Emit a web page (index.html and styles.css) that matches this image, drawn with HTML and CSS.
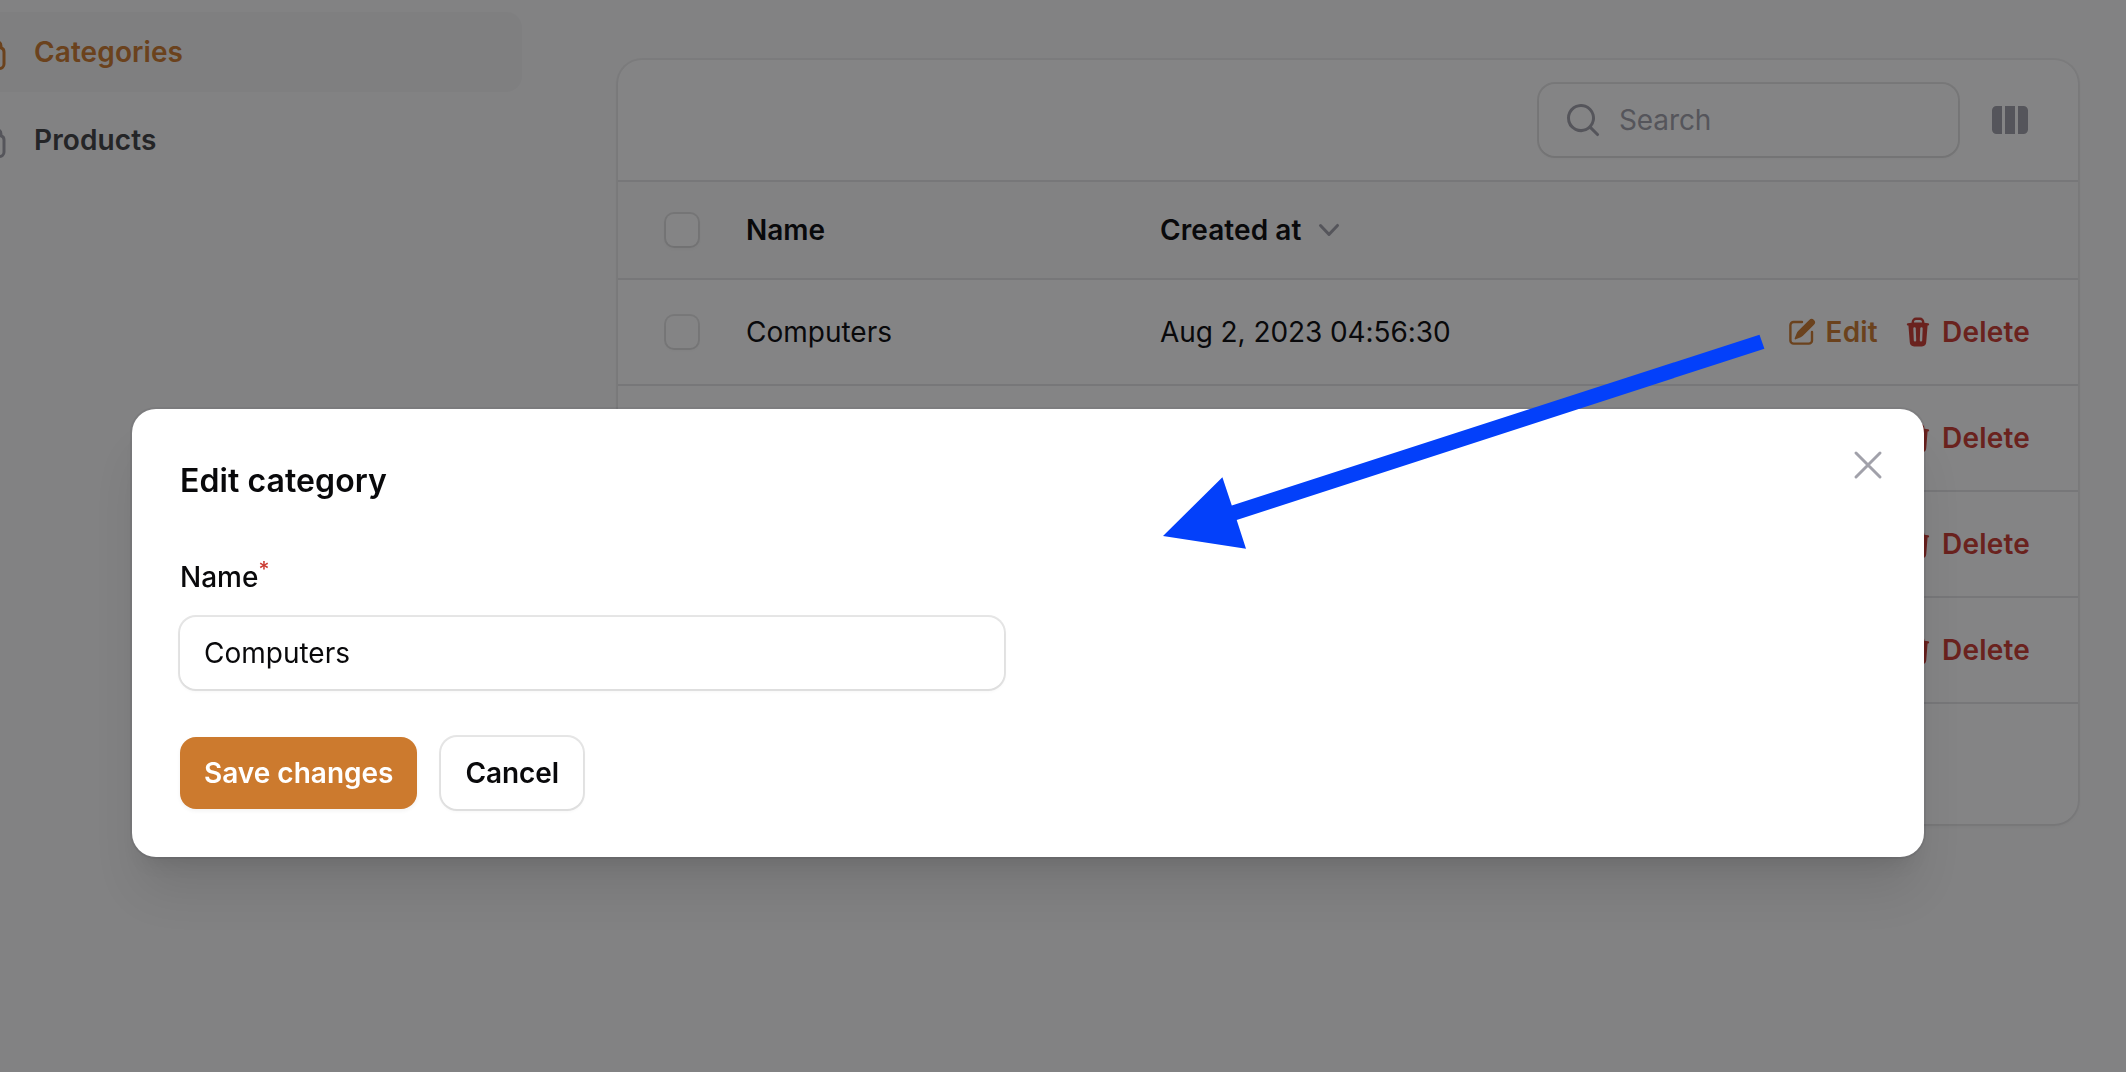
FILE: index.html
```html
<!DOCTYPE html>
<html lang="en">
<head>
<meta charset="utf-8">
<title>Categories</title>
<link rel="stylesheet" href="styles.css">
</head>
<body>
<svg class="sprite" aria-hidden="true">
  <symbol id="stack" viewBox="0 0 24 24"><path fill="none" stroke="currentColor" stroke-width="1.5" stroke-linecap="round" stroke-linejoin="round" d="M6 6.878V6a2.25 2.25 0 012.25-2.25h7.5A2.25 2.25 0 0118 6v.878m-12 0c.235-.083.487-.128.75-.128h10.5c.263 0 .515.045.75.128m-12 0A2.25 2.25 0 004.5 9v.878m13.5-3A2.25 2.25 0 0119.5 9v.878m0 0a2.246 2.246 0 00-.75-.128H5.25c-.263 0-.515.045-.75.128m15 0A2.25 2.25 0 0121 12v6a2.25 2.25 0 01-2.25 2.25H5.25A2.25 2.25 0 013 18v-6c0-.98.626-1.813 1.5-2.122"/></symbol>
  <symbol id="search" viewBox="0 0 20 20"><path fill="currentColor" fill-rule="evenodd" d="M9 3.5a5.5 5.5 0 100 11 5.5 5.5 0 000-11zM2 9a7 7 0 1112.452 4.391l3.328 3.329a.75.75 0 11-1.06 1.06l-3.329-3.328A7 7 0 012 9z"/></symbol>
  <symbol id="columns" viewBox="0 0 20 20"><path fill="currentColor" d="M14 17h2.75A2.25 2.25 0 0019 14.75v-9.5A2.25 2.25 0 0016.75 3H14v14zM12.5 3h-5v14h5V3zM3.25 3H6v14H3.25A2.25 2.25 0 011 14.75v-9.5A2.25 2.25 0 013.25 3z"/></symbol>
  <symbol id="chevron" viewBox="0 0 20 20"><path fill="currentColor" fill-rule="evenodd" d="M5.23 7.21a.75.75 0 011.06.02L10 11.168l3.71-3.938a.75.75 0 111.08 1.04l-4.25 4.5a.75.75 0 01-1.08 0l-4.25-4.5a.75.75 0 01.02-1.06z"/></symbol>
  <symbol id="pencil" viewBox="0 0 20 20"><path fill="currentColor" d="M5.433 13.917l1.262-3.155A4 4 0 017.58 9.42l6.92-6.918a2.121 2.121 0 013 3l-6.92 6.918c-.383.383-.84.685-1.343.886l-3.154 1.262a.5.5 0 01-.65-.65z"/><path fill="currentColor" d="M3.5 5.75c0-.69.56-1.25 1.25-1.25H10A.75.75 0 0010 3H4.75A2.75 2.75 0 002 5.75v9.5A2.75 2.75 0 004.75 18h9.5A2.75 2.75 0 0017 15.25V10a.75.75 0 00-1.5 0v5.25c0 .69-.56 1.25-1.25 1.25h-9.5c-.69 0-1.25-.56-1.25-1.25v-9.5z"/></symbol>
  <symbol id="trash" viewBox="0 0 20 20"><path fill="currentColor" fill-rule="evenodd" d="M8.75 1A2.75 2.75 0 006 3.75v.443c-.795.077-1.584.176-2.365.298a.75.75 0 10.23 1.482l.149-.022.841 10.518A2.75 2.75 0 007.596 19h4.807a2.75 2.75 0 002.742-2.53l.841-10.52.149.023a.75.75 0 00.23-1.482A41.03 41.03 0 0014 4.193V3.75A2.75 2.75 0 0011.25 1h-2.5zM10 4c.84 0 1.673.025 2.5.075V3.75c0-.69-.56-1.25-1.25-1.25h-2.5c-.69 0-1.25.56-1.25 1.25v.325C8.327 4.025 9.16 4 10 4zM8.58 7.72a.75.75 0 00-1.5.06l.3 7.5a.75.75 0 101.5-.06l-.3-7.5zm4.34.06a.75.75 0 10-1.5-.06l-.3 7.5a.75.75 0 101.5.06l.3-7.5z"/></symbol>
  <symbol id="close" viewBox="0 0 24 24"><path fill="none" stroke="currentColor" stroke-width="1.5" stroke-linecap="round" d="M6 18L18 6M6 6l12 12"/></symbol>
</svg>

<div class="page">
  <nav class="sidebar">
    <a class="nav-item active"><svg class="icon-lg"><use href="#stack"/></svg>Categories</a>
    <a class="nav-item"><svg class="icon-lg"><use href="#stack"/></svg>Products</a>
  </nav>
  <main class="content">
    <section class="card">
      <div class="toolbar">
        <div class="search"><svg class="icon-md"><use href="#search"/></svg>Search</div>
        <svg class="icon-md"><use href="#columns"/></svg>
      </div>
      <div class="row head">
        <span class="checkbox"></span><span>Name</span>
        <span class="sort">Created at<svg class="icon-md"><use href="#chevron"/></svg></span>
      </div>
      <div class="row">
        <span class="checkbox"></span><span>Computers</span><span class="date">Aug 2, 2023 04:56:30</span>
        <div class="actions">
          <a class="action edit"><svg class="icon-sm"><use href="#pencil"/></svg>Edit</a>
          <a class="action delete"><svg class="icon-sm"><use href="#trash"/></svg>Delete</a>
        </div>
      </div>
      <div class="row"><div class="actions"><a class="action delete"><svg class="icon-sm"><use href="#trash"/></svg>Delete</a></div></div>
      <div class="row"><div class="actions"><a class="action delete"><svg class="icon-sm"><use href="#trash"/></svg>Delete</a></div></div>
      <div class="row"><div class="actions"><a class="action delete"><svg class="icon-sm"><use href="#trash"/></svg>Delete</a></div></div>
      <div class="footer"></div>
    </section>
  </main>
</div>

<div class="overlay">
  <div class="modal" role="dialog">
    <svg class="icon-lg modal-close"><use href="#close"/></svg>
    <h2 class="modal-title">Edit category</h2>
    <div class="field">
      <label class="label">Name<sup class="required">*</sup></label>
      <div class="input">Computers</div>
    </div>
    <div class="buttons">
      <button class="button primary">Save changes</button>
      <button class="button outlined">Cancel</button>
    </div>
  </div>
</div>

<svg class="arrow" viewBox="0 0 602 216"><path fill="#0340fa" d="M0 59L59.4 .3L68.8 28.6L596.5 -142.3L601.4 -128.3L73.7 43L83 71.7Z" transform="translate(0 143)"/></svg>
</body>
</html>
```

FILE: styles.css
```css
* { box-sizing: border-box; }

body {
  margin: 0;
  width: 2126px;
  height: 1072px;
  overflow: hidden;
  background: #fafafa;
  color: #09090b;
  font: 400 28px/48px Inter, "Liberation Sans", sans-serif;
}

.sprite { display: none; }
.icon-sm { width: 32px; height: 32px; flex: none; }
.icon-md { width: 40px; height: 40px; flex: none; color: #a1a1aa; }
.icon-lg { width: 48px; height: 48px; flex: none; color: #a1a1aa; }

.page { display: flex; height: 1072px; }

.sidebar {
  display: flex;
  flex-direction: column;
  gap: 8px;
  width: 522px;
  padding-top: 12px;
}

.nav-item {
  display: flex;
  align-items: center;
  gap: 24px;
  height: 80px;
  margin-left: -54px;
  padding: 16px;
  border-radius: 16px;
  color: #3f4043;
  font-weight: 600;
  letter-spacing: .1px;
}
.nav-item.active { background: #f4f4f5; color: #cc7a2e; }
.nav-item.active .icon-lg { color: #cc7a2e; }

.content { flex: 1; padding: 60px 48px 0 96px; }

.card {
  border-radius: 24px;
  background: #fff;
  box-shadow: 0 0 0 2px rgba(9, 9, 11, .05), 0 2px 4px rgba(0, 0, 0, .05);
}

.toolbar {
  display: flex;
  align-items: center;
  justify-content: flex-end;
  gap: 32px;
  height: 120px;
  padding: 0 48px;
}

.search {
  display: flex;
  align-items: center;
  gap: 16px;
  width: 419px;
  height: 72px;
  padding: 0 24px;
  border-radius: 16px;
  color: #a1a1aa;
  letter-spacing: -.1px;
  box-shadow: 0 0 0 2px rgba(9, 9, 11, .1), 0 2px 4px rgba(0, 0, 0, .05);
}

.row {
  display: grid;
  grid-template-columns: 80px 414px 1fr auto;
  align-items: center;
  height: 106px;
  padding: 0 48px;
  border-top: 2px solid #e4e4e7;
}
.row.head { height: 98px; background: #fafafa; font-weight: 600; }

.checkbox {
  width: 32px;
  height: 32px;
  border-radius: 8px;
  background: #fff;
  box-shadow: 0 0 0 2px rgba(9, 9, 11, .1), 0 2px 4px rgba(0, 0, 0, .05);
}

.sort { display: flex; align-items: center; gap: 8px; letter-spacing: .07px; }
.date { letter-spacing: -.08px; }

.actions { display: flex; grid-column: 4; gap: 24px; }
.action { display: flex; align-items: center; gap: 8px; font-weight: 600; letter-spacing: .2px; }
.edit { color: #cc7a2e; }
.delete { color: #cb3a31; }

.footer { height: 122px; border-top: 2px solid #e4e4e7; }

.overlay {
  position: fixed;
  inset: 0;
  padding: 409px 202px 0 132px;
  background: rgba(9, 9, 11, .5);
}

.modal {
  position: relative;
  display: flex;
  flex-direction: column;
  gap: 48px;
  height: 448px;
  padding: 48px;
  border-radius: 24px;
  background: #fff;
  box-shadow: 0 0 0 2px rgba(9, 9, 11, .05), 0 40px 50px -10px rgba(0, 0, 0, .1), 0 16px 20px -12px rgba(0, 0, 0, .1);
}
.modal-close { position: absolute; top: 32px; right: 32px; }
.modal-title { margin: 0; font-size: 32px; font-weight: 600; line-height: 48px; letter-spacing: .08px; }

.field { display: flex; flex-direction: column; gap: 16px; width: 824px; }
.label { height: 48px; font-weight: 500; }
.required { color: #cb3a31; font-size: 21px; line-height: 0; }

.input {
  height: 72px;
  padding: 12px 24px;
  border-radius: 16px;
  box-shadow: 0 0 0 2px rgba(9, 9, 11, .1), 0 2px 4px rgba(0, 0, 0, .05);
}

.buttons { display: flex; gap: 24px; }
.button {
  height: 72px;
  padding: 12px 24px;
  border: 0;
  border-radius: 16px;
  background: #fff;
  color: #09090b;
  font: inherit;
  font-weight: 600;
}
.primary { background: #cc7a2e; color: #fff; box-shadow: 0 2px 4px rgba(0, 0, 0, .05); }
.outlined { letter-spacing: -.1px; box-shadow: 0 0 0 2px rgba(9, 9, 11, .1), 0 2px 4px rgba(0, 0, 0, .05); }

.arrow {
  position: absolute;
  left: 1163px;
  top: 334px;
  width: 602px;
  height: 216px;
}
```
